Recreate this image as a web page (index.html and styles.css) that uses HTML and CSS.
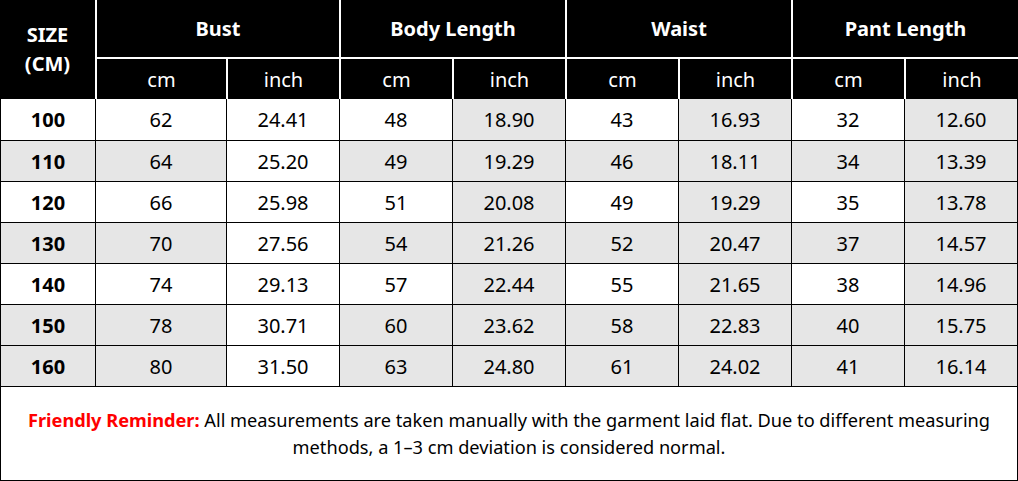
FILE: index.html
```html
<!DOCTYPE html>
<html lang="en">
<head>
<meta charset="utf-8">
<title>Size Chart</title>
<link rel="stylesheet" href="styles.css">
</head>
<body>
<div class="chart">
  <div class="head">
    <div class="hcell size">SIZE<br>(CM)</div>
    <div class="hcell group">Bust</div>
    <div class="hcell group">Body Length</div>
    <div class="hcell group">Waist</div>
    <div class="hcell group">Pant Length</div>
    <div class="hcell sub">cm</div>
    <div class="hcell sub">inch</div>
    <div class="hcell sub">cm</div>
    <div class="hcell sub">inch</div>
    <div class="hcell sub">cm</div>
    <div class="hcell sub">inch</div>
    <div class="hcell sub">cm</div>
    <div class="hcell sub">inch</div>
  </div>
  <div class="body">
    <div class="row">
      <div class="cell key">100</div><div class="cell">62</div><div class="cell plain">24.41</div><div class="cell">48</div><div class="cell shade">18.90</div><div class="cell">43</div><div class="cell shade">16.93</div><div class="cell">32</div><div class="cell shade">12.60</div>
    </div>
    <div class="row alt">
      <div class="cell key">110</div><div class="cell">64</div><div class="cell plain">25.20</div><div class="cell">49</div><div class="cell shade">19.29</div><div class="cell">46</div><div class="cell shade">18.11</div><div class="cell">34</div><div class="cell shade">13.39</div>
    </div>
    <div class="row">
      <div class="cell key">120</div><div class="cell">66</div><div class="cell plain">25.98</div><div class="cell">51</div><div class="cell shade">20.08</div><div class="cell">49</div><div class="cell shade">19.29</div><div class="cell">35</div><div class="cell shade">13.78</div>
    </div>
    <div class="row alt">
      <div class="cell key">130</div><div class="cell">70</div><div class="cell plain">27.56</div><div class="cell">54</div><div class="cell shade">21.26</div><div class="cell">52</div><div class="cell shade">20.47</div><div class="cell">37</div><div class="cell shade">14.57</div>
    </div>
    <div class="row">
      <div class="cell key">140</div><div class="cell">74</div><div class="cell plain">29.13</div><div class="cell">57</div><div class="cell shade">22.44</div><div class="cell">55</div><div class="cell shade">21.65</div><div class="cell">38</div><div class="cell shade">14.96</div>
    </div>
    <div class="row alt">
      <div class="cell key">150</div><div class="cell">78</div><div class="cell plain">30.71</div><div class="cell">60</div><div class="cell shade">23.62</div><div class="cell">58</div><div class="cell shade">22.83</div><div class="cell">40</div><div class="cell shade">15.75</div>
    </div>
    <div class="row alt">
      <div class="cell key">160</div><div class="cell">80</div><div class="cell plain">31.50</div><div class="cell">63</div><div class="cell shade">24.80</div><div class="cell">61</div><div class="cell shade">24.02</div><div class="cell">41</div><div class="cell shade">16.14</div>
    </div>
  </div>
  <div class="note">
    <p><span class="warn">Friendly Reminder:</span> All measurements are taken manually with the garment laid flat. Due to different measuring<br>methods, a 1–3 cm deviation is considered normal.</p>
  </div>
</div>
</body>
</html>
```

FILE: styles.css
```css
html, body {
  margin: 0;
  padding: 0;
  background: #fff;
}

body {
  font-family: "Noto Sans", "Open Sans", "DejaVu Sans", sans-serif;
  color: #000;
}

.chart {
  width: 1018px;
  height: 481px;
  display: flex;
  flex-direction: column;
}

.head {
  display: grid;
  grid-template-columns: 95px 129px repeat(6, 111px) 112px;
  grid-template-rows: 57px 40px;
  column-gap: 2px;
  row-gap: 2px;
  background: #fff;
}

.hcell {
  background: #000;
  color: #fff;
  display: flex;
  align-items: center;
  justify-content: center;
  text-align: center;
  font-size: 20px;
}

.hcell.size {
  grid-row: span 2;
  font-weight: 700;
  line-height: 29px;
  padding-bottom: 1px;
}

.hcell.group {
  grid-column: span 2;
  font-weight: 700;
  padding-bottom: 1px;
}

.hcell.sub {
  font-weight: 400;
}

.body {
  display: flex;
  flex-direction: column;
  gap: 1px;
  padding: 0 1px 1px;
  background: #000;
}

.row {
  display: grid;
  grid-template-columns: 94px 130px repeat(7, 112px);
  column-gap: 1px;
  height: 40px;
}

.row:first-child {
  height: 41px;
}

.cell {
  background: #fff;
  display: flex;
  align-items: center;
  justify-content: center;
  font-size: 20px;
}

.row.alt .cell {
  background: #e6e6e6;
}

.cell.shade,
.row .cell.shade {
  background: #e6e6e6;
}

.row .cell.plain,
.row.alt .cell.plain {
  background: #fff;
}

.cell.key {
  font-weight: 700;
}

.note {
  flex: 1;
  border: 1px solid #000;
  border-top: 0;
  display: flex;
  align-items: center;
  justify-content: center;
}

.note p {
  margin: 0;
  text-align: center;
  font-size: 18.2px;
  line-height: 26.5px;
  color: #000;
}

.warn {
  color: #f00;
  font-weight: 700;
}
```
